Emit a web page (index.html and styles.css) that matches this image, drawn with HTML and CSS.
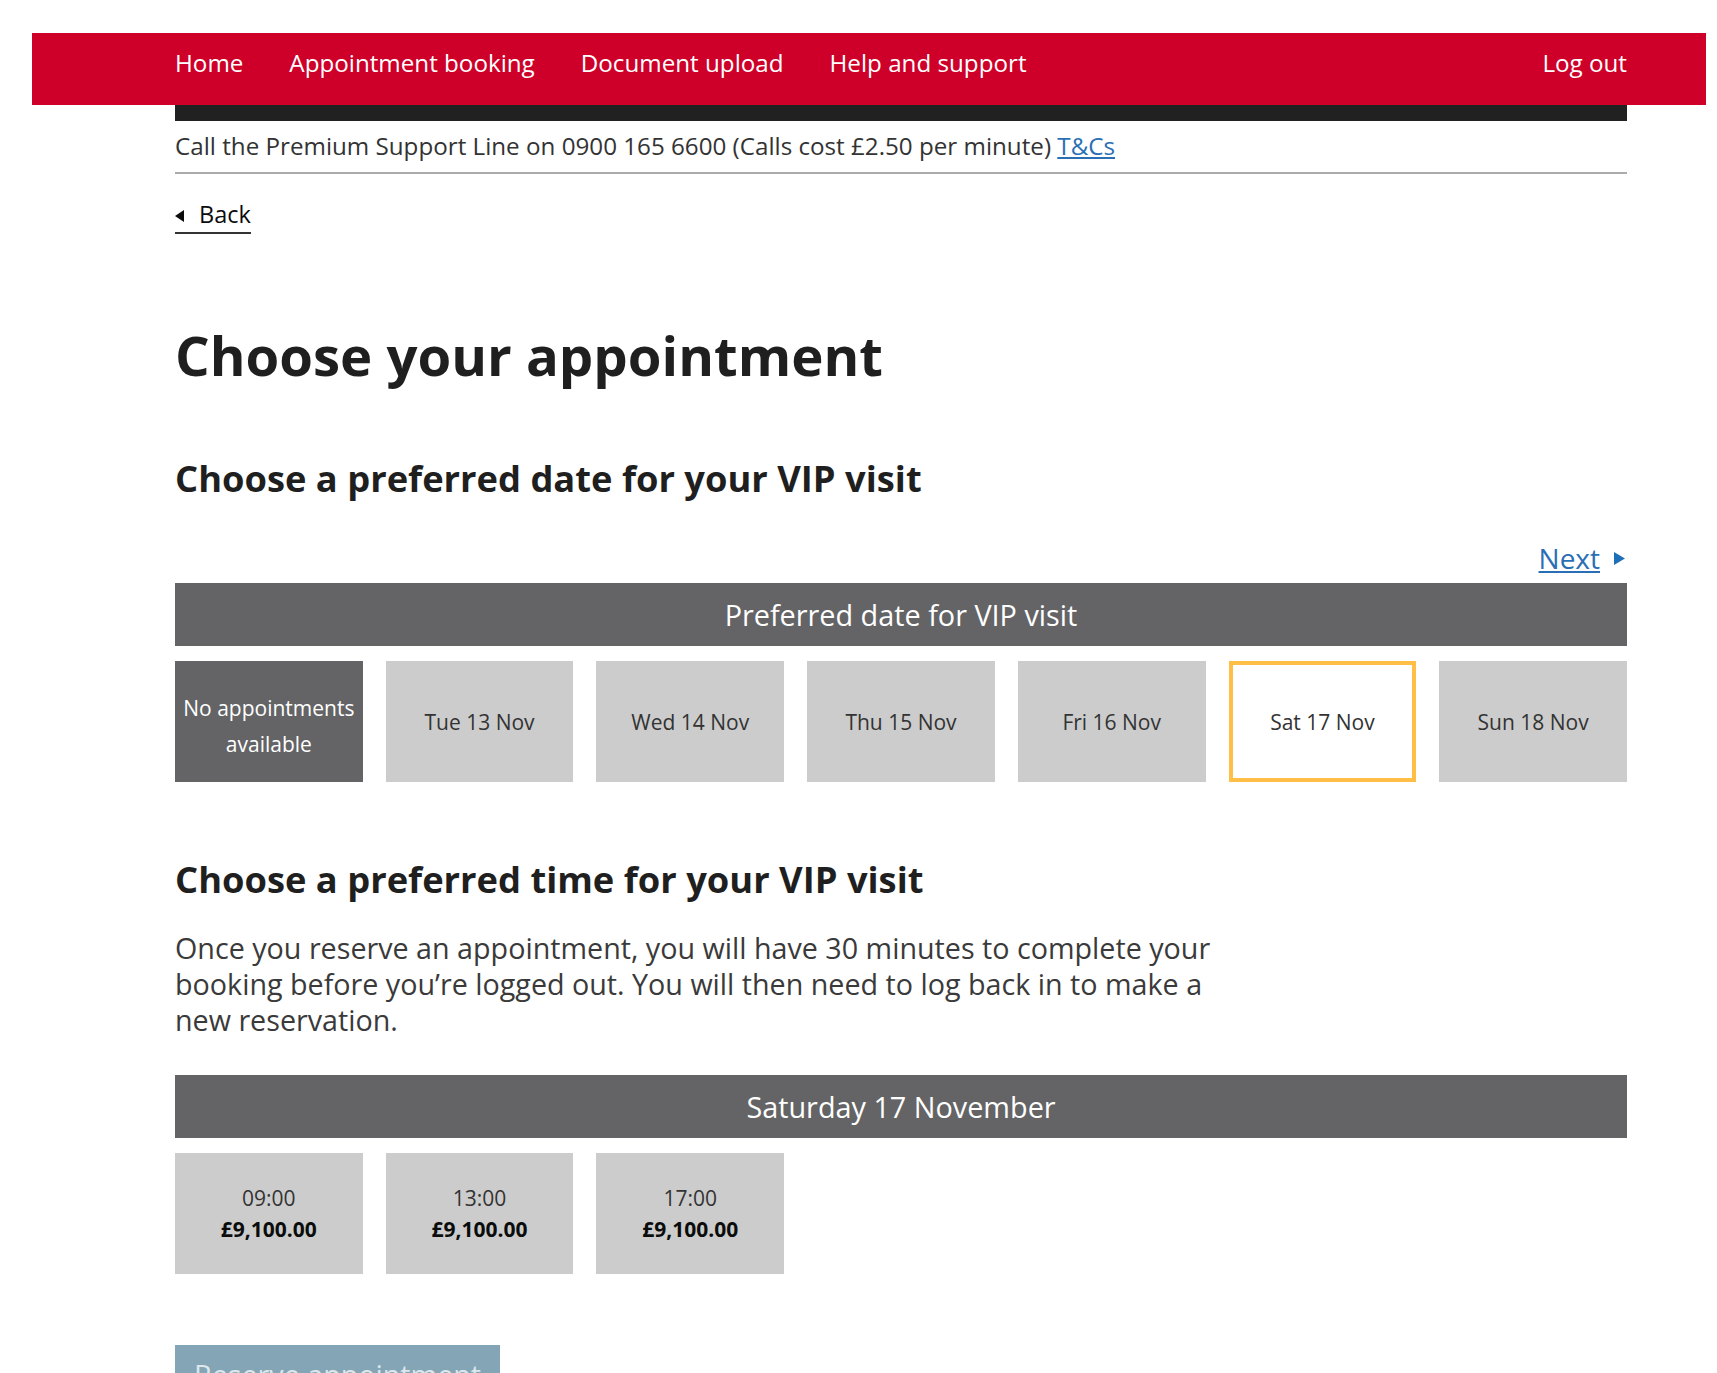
FILE: index.html
```html
<!DOCTYPE html>
<html lang="en">
<head>
    <meta charset="UTF-8">
    <meta name="viewport" content="width=device-width, initial-scale=1.0">
    <title>Choose your appointment</title>
    <link rel="stylesheet" href="styles.css">
</head>
<body>
    <header class="topbar">
        <nav class="nav">
            <a href="#" class="nav-link">Home</a>
            <a href="#" class="nav-link">Appointment booking</a>
            <a href="#" class="nav-link">Document upload</a>
            <a href="#" class="nav-link">Help and support</a>
            <a href="#" class="nav-link nav-logout">Log out</a>
        </nav>
    </header>

    <main class="page">
        <div class="strip"></div>
        <p class="support">Call the Premium Support Line on 0900 165 6600 (Calls cost £2.50 per minute) <a href="#" class="link">T&amp;Cs</a></p>

        <div class="back-row">
            <a href="#" class="back">
                <svg class="back-arrow" width="9" height="12" viewBox="0 0 9 12"><path d="M9 0 L0 6 L9 12 Z" fill="#0b0c0c"/></svg>
                Back
            </a>
        </div>

        <h1 class="title">Choose your appointment</h1>

        <h2 class="subtitle subtitle-date">Choose a preferred date for your VIP visit</h2>

        <div class="pager">
            <a href="#" class="link next">Next</a>
            <svg class="next-arrow" width="11" height="13" viewBox="0 0 11 13"><path d="M0 0 L11 6.5 L0 13 Z" fill="#1d70b8"/></svg>
        </div>

        <section class="slots">
            <div class="slots-head">Preferred date for VIP visit</div>
            <div class="slots-grid">
                <div class="slot slot-empty">No appointments<br>available</div>
                <div class="slot">Tue 13 Nov</div>
                <div class="slot">Wed 14 Nov</div>
                <div class="slot">Thu 15 Nov</div>
                <div class="slot">Fri 16 Nov</div>
                <div class="slot slot-selected">Sat 17 Nov</div>
                <div class="slot">Sun 18 Nov</div>
            </div>
        </section>

        <h2 class="subtitle subtitle-time">Choose a preferred time for your VIP visit</h2>

        <p class="intro">Once you reserve an appointment, you will have 30 minutes to complete your booking before you’re logged out. You will then need to log back in to make a new reservation.</p>

        <section class="slots slots-time">
            <div class="slots-head">Saturday 17 November</div>
            <div class="slots-grid">
                <div class="slot slot-time"><span>09:00</span><b>£9,100.00</b></div>
                <div class="slot slot-time"><span>13:00</span><b>£9,100.00</b></div>
                <div class="slot slot-time"><span>17:00</span><b>£9,100.00</b></div>
            </div>
        </section>

        <button class="btn-reserve" disabled>Reserve appointment</button>
    </main>
</body>
</html>
```

FILE: styles.css
```css
body {
    margin: 0;
    background-color: white;
    font-family: "Open Sans", "Noto Sans", Arial, sans-serif;
    color: #333;
}

a {
    text-decoration: none;
}

.topbar {
    margin: 33px 11px 0 32px;
    height: 72px;
    background-color: #ce0029;
}

.nav {
    display: flex;
    gap: 46px;
    width: 1452px;
    margin-left: 143px;
    padding-top: 13px;
}

.nav-link {
    color: white;
    font-size: 24.2px;
    line-height: 33px;
}

.nav-logout {
    margin-left: auto;
}

.page {
    width: 1452px;
    margin-left: 175px;
}

.strip {
    height: 16px;
    background-color: #212121;
}

.support {
    margin: 0;
    padding: 7px 0 8px;
    font-size: 24.2px;
    line-height: 36px;
    color: #333;
    border-bottom: 2px solid #a9abad;
}

.link {
    color: #2a6fb5;
    text-decoration: underline;
}

.back-row {
    display: flex;
    margin-top: 25px;
}

.back {
    display: flex;
    align-items: center;
    gap: 15px;
    color: #0b0c0c;
    font-size: 23.5px;
    line-height: 31px;
    padding-bottom: 2px;
    border-bottom: 2px solid #333;
}

.back-arrow {
    margin-top: 2px;
}

.title {
    margin: 89px 0 0;
    font-size: 54.5px;
    line-height: 64px;
    font-weight: 700;
    color: #1f1f1f;
}

.subtitle {
    margin: 67px 0 0;
    font-size: 36.3px;
    line-height: 44px;
    font-weight: 700;
    color: #1f1f1f;
}

.subtitle-date {
    margin-top: 69px;
}

.pager {
    display: flex;
    justify-content: flex-end;
    align-items: center;
    gap: 14px;
    margin: 40px 2px 7px 0;
    height: 36px;
}

.next {
    font-size: 28px;
    line-height: 36px;
}

.slots-head {
    height: 63px;
    line-height: 63px;
    text-align: center;
    background-color: #646466;
    color: white;
    font-size: 28.8px;
}

.slots-grid {
    display: grid;
    grid-template-columns: repeat(7, 1fr);
    gap: 23px;
    margin-top: 15px;
}

.slot {
    height: 121px;
    display: flex;
    align-items: center;
    justify-content: center;
    text-align: center;
    background-color: #cccccc;
    color: #333;
    font-size: 21px;
    box-sizing: border-box;
}

.slot-empty {
    background-color: #646466;
    color: white;
    line-height: 36px;
    padding-top: 8px;
}

.slot-selected {
    background-color: white;
    border: 4px solid #ffbf47;
}

.slot-time {
    flex-direction: column;
    line-height: 31px;
}

.slot-time b {
    color: #0b0c0c;
}

.subtitle-time {
    margin-top: 75px;
}

.intro {
    margin: 29px 0 0;
    max-width: 1080px;
    font-size: 28.7px;
    line-height: 36px;
    color: #3a3a3a;
}

.slots-time {
    margin-top: 37px;
}

.btn-reserve {
    margin-top: 71px;
    padding: 12px 19px;
    border: none;
    background-color: #84a5b5;
    color: #dce7ec;
    font-family: "Open Sans", "Noto Sans", Arial, sans-serif;
    font-size: 28.7px;
    line-height: 36px;
}
```
